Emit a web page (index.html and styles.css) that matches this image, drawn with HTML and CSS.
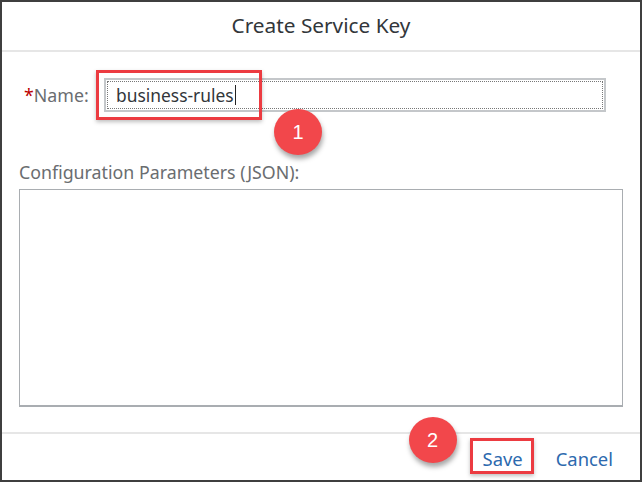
FILE: index.html
```html
<!DOCTYPE html>
<html>
<head>
<meta charset="utf-8">
<link rel="stylesheet" href="styles.css">
</head>
<body>
<div class="dialog">
  <header class="dlg-header"><h1 class="title">Create Service Key</h1></header>
  <main class="dlg-content">
    <div class="name-row">
      <label class="name-label"><span class="req">*</span>Name:</label>
      <div class="input"><span class="input-text">business-rules</span><span class="caret"></span></div>
      <div class="hl hl-name"></div>
      <div class="badge badge-1">1</div>
    </div>
    <div class="config-label">Configuration Parameters (JSON):</div>
    <div class="textarea"></div>
  </main>
  <footer class="dlg-footer">
    <div class="btn-wrap">
      <span class="btn">Save</span>
      <div class="hl hl-save"></div>
      <div class="badge badge-2">2</div>
    </div>
    <span class="btn cancel">Cancel</span>
  </footer>
</div>
</body>
</html>
```

FILE: styles.css
```css
* { box-sizing: border-box; }
html, body { margin: 0; padding: 0; background: #fff; }
body { font-family: "Noto Sans", "Open Sans", sans-serif; }

.dialog {
  width: 642px;
  height: 482px;
  border: 2px solid #3f3f3f;
  display: flex;
  flex-direction: column;
  background: #fff;
}

.dlg-header {
  height: 50px;
  border-bottom: 2px solid #e6e6e6;
  display: flex;
  align-items: center;
  justify-content: center;
}
.title {
  margin: 0;
  font-size: 20.8px;
  font-weight: 400;
  color: #32363a;
  padding-bottom: 2px;
}

.dlg-content {
  flex: 1;
  padding: 26px 18px 0 17px;
}

.name-row {
  position: relative;
  display: flex;
  align-items: center;
  height: 34px;
  padding-left: 5px;
}
.name-label {
  width: 80px;
  font-size: 17.8px;
  color: #6a6d70;
  white-space: nowrap;
}
.req { color: #bb0000; }

.input {
  width: 502px;
  height: 34px;
  border: 2px solid #c4c7ca;
  outline: 1px dotted #777;
  outline-offset: -4px;
  display: flex;
  align-items: center;
  padding-left: 10px;
}
.input-text {
  font-size: 17.4px;
  color: #32363a;
}
.caret {
  width: 1px;
  height: 20px;
  background: #222;
  margin-left: 1px;
}

.hl {
  position: absolute;
  border: 3px solid #ec3b41;
  box-shadow: 0 2px 4px rgba(0,0,0,0.25);
}
.hl-name { left: 77px; top: -8px; width: 166px; height: 50px; }

.badge {
  position: absolute;
  width: 48px;
  height: 46px;
  border-radius: 50%;
  background: #f2474b;
  color: #fff;
  font-family: "Liberation Sans", Arial, sans-serif;
  font-size: 20px;
  display: flex;
  align-items: center;
  justify-content: center;
  box-shadow: 1px 4px 5px rgba(0,0,0,0.35);
}
.badge-1 { left: 255px; top: 31px; }

.config-label {
  margin-top: 48px;
  font-size: 17.8px;
  color: #6a6d70;
}
.textarea {
  margin-top: 5px;
  width: 604px;
  height: 218px;
  border: 1px solid #a9adb1;
  border-bottom-width: 2px;
}

.dlg-footer {
  height: 48px;
  border-top: 2px solid #e6e6e6;
  display: flex;
  align-items: center;
  justify-content: flex-end;
  padding-right: 27px;
  gap: 33px;
}
.btn-wrap { position: relative; }
.btn {
  font-size: 18.4px;
  line-height: 24px;
  color: #2c69ae;
  padding-top: 4px;
  display: block;
}
.hl-save { left: -13px; top: -5px; width: 64px; height: 36px; }
.badge-2 { left: -74px; top: -26px; }
```
